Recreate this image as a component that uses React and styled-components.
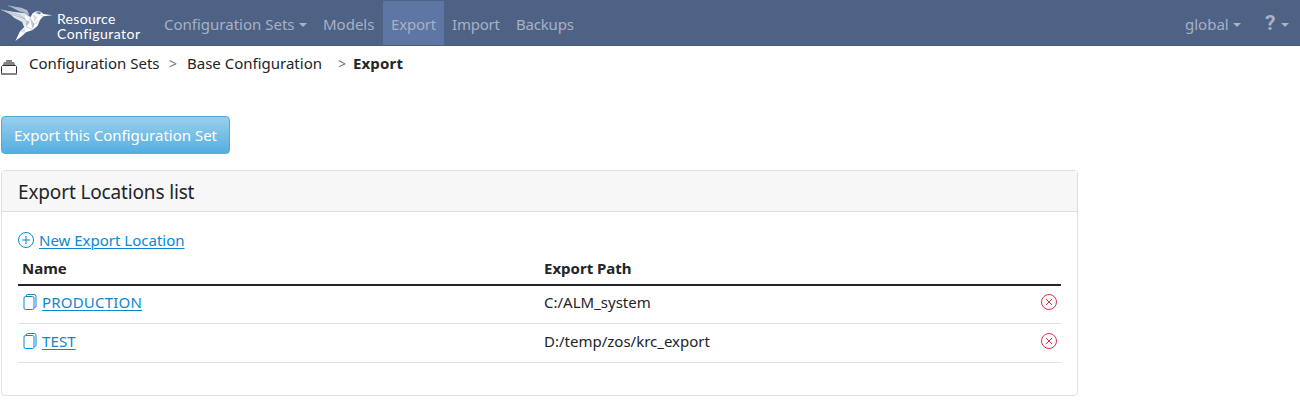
import React from "react";
import styled, { createGlobalStyle } from "styled-components";

const GlobalStyle = createGlobalStyle`
  * { box-sizing: border-box; }
  body {
    margin: 0;
    background: #fff;
    color: #212529;
    font: 15px/24px "Noto Sans", "Open Sans", sans-serif;
    overflow: hidden;
  }
`;

/* Text run with its own tracking */
const Label = styled.span`
  letter-spacing: ${(p) => p.$track ?? 0}px;
  white-space: nowrap;
`;

const Navbar = styled.nav`
  display: flex;
  height: 46px;
  padding: 1px 3px 1px 0;
  background: #4e6286;
  border-bottom: 1px solid #4a5d80;
`;

const Brand = styled.div`
  display: flex;
  width: 156px;
`;

const BrandName = styled.div`
  margin-left: 2px;
  padding-top: 10px;
  color: #fff;
  font: 14px/15px Lato, sans-serif;
`;

const NavItem = styled.a`
  display: flex;
  align-items: center;
  width: ${(p) => p.$width}px;
  height: 44px;
  padding: 2px 0 0 8px;
  color: #a7b1c3;
  background: ${(p) => (p.$active ? "#5d76a3" : "transparent")};
`;

const Caret = styled.i`
  margin: 1px 0 0 ${(p) => p.$gap ?? 4}px;
  border: 4px solid transparent;
  border-top-color: currentColor;
  border-bottom: 0;
`;

const Spacer = styled.div`
  flex: 1;
`;

const Question = styled.b`
  width: 11px;
  margin-top: -3px;
  font: bold 21px/24px Roboto, sans-serif;
`;

const Breadcrumb = styled.div`
  display: flex;
  height: 70px;
  padding: 5px 0 0 1px;
`;

const Crumb = styled.span`
  width: ${(p) => p.$width}px;
  font-weight: ${(p) => (p.$current ? 700 : 400)};
`;

const Separator = styled.span`
  width: ${(p) => p.$width}px;
  color: #6c757d;
  font-size: 14px;
  line-height: 26px;
`;

const StackIcon = styled.svg`
  width: 16px;
  height: 16px;
  flex-shrink: 0;
  margin: 8px 12px 0 0;
`;

const ExportButton = styled.button`
  display: block;
  width: 229px;
  height: 38px;
  margin-left: 1px;
  padding: 0 0 0 12px;
  text-align: left;
  color: #fff;
  font: inherit;
  border: 1px solid #54a9dc;
  border-radius: 4px;
  background: linear-gradient(#9acfee, #54aee0);
`;

const Card = styled.section`
  width: 1077px;
  height: 226px;
  margin: 16px 0 0 1px;
  border: 1px solid #dfdfdf;
  border-radius: 4px;
`;

const CardHeader = styled.header`
  height: 41px;
  padding: 9px 16px;
  font-size: 19px;
  border-bottom: 1px solid #dfdfdf;
  background: #f7f7f7;
`;

const CardBody = styled.div`
  padding: 16px;
`;

const Link = styled.a`
  display: flex;
  align-items: center;
  height: 24px;
  color: #0d87d0;
  ${Label} {
    text-decoration: underline;
    text-underline-offset: 2px;
    text-decoration-thickness: 1px;
  }
`;

const Icon = styled.svg`
  width: 16px;
  height: 16px;
  margin-right: ${(p) => p.$gap ?? 0}px;
  fill: none;
  stroke: ${(p) => p.$color ?? "#0d87d0"};
`;

const Row = styled.div`
  display: grid;
  grid-template-columns: 522px 1fr 20px;
  height: ${(p) => p.$height ?? 39}px;
  padding: ${(p) => (p.$height ? 4 : 5)}px 0 0 4px;
  font-weight: ${(p) => (p.$head ? 700 : 400)};
  border-bottom: ${(p) => (p.$head ? "2px solid #212529" : "1px solid #dee2e6")};
`;

const RemoveIcon = styled(Icon)`
  margin-top: 4px;
`;

const Bird = () => (
  <svg width="55" height="44" viewBox="0 3 165 132">
    <path d="M25 17L64 23 82 31 88 46 76 39 58 34Z" fill="#b4bed0" />
    <path d="M3 29L44 36 76 40 92 52 86 86 72 80 66 66 42 53 30 42Z" fill="#dfe3eb" />
    <path d="M76 46L90 54 98 40 110 33 122 35 130 42 157 46 130 49 120 60 113 77 98 90 78 97 66 108 46 123 60 94 74 80Z" fill="#fff" />
    <path d="M25 17L58 26 84 44M3 29L60 46 80 62M30 42L76 56" stroke="#a1acc2" fill="none" strokeWidth="2" />
    <path d="M90 54L104 72 98 88ZM76 60L90 66 78 80Z" fill="#b9c2d2" />
    <path d="M98 42L112 52 104 66ZM60 94L76 84 74 99Z" fill="#d6dbe5" />
    <path d="M90 54L78 80 98 88M104 72L120 60M104 39L130 48" stroke="#aab4c7" fill="none" strokeWidth="1.5" />
    <path d="M108 34L122 36 123 42 111 41Z" fill="#8d9bb8" />
    <circle cx="118" cy="39" r="2" fill="#4e6286" />
  </svg>
);

const Copy = () => (
  <Icon $gap={4} viewBox="-0.5 0 16 16">
    <rect x="1.5" y="2.5" width="10" height="13" rx="1.5" />
    <path d="M3.5 2.2Q3.7.5 5.3.5H11.5Q13.5.5 13.5 2.5V12Q13.5 13.4 11.8 13.7" />
  </Icon>
);

const locations = [
  { name: "PRODUCTION", path: "C:/ALM_system", height: 38, track: 0.2 },
  { name: "TEST", path: "D:/temp/zos/krc_export", track: 0.1 },
];

export default function App() {
  return (
    <>
      <GlobalStyle />
      <Navbar>
        <Brand>
          <Bird />
          <BrandName>
            <Label $track={0.3}>Resource</Label>
            <br />
            <Label $track={0.45}>Configurator</Label>
          </BrandName>
        </Brand>
        <NavItem $width={159}><Label>Configuration Sets</Label><Caret /></NavItem>
        <NavItem $width={68}><Label>Models</Label></NavItem>
        <NavItem $width={61} $active><Label $track={-0.2}>Export</Label></NavItem>
        <NavItem $width={64}><Label $track={-0.2}>Import</Label></NavItem>
        <NavItem $width={74}><Label $track={-0.2}>Backups</Label></NavItem>
        <Spacer />
        <NavItem $width={80}><Label>global</Label><Caret /></NavItem>
        <NavItem $width={40}><Question>?</Question><Caret $gap={5} /></NavItem>
      </Navbar>
      <Breadcrumb>
        <StackIcon viewBox="0 0 16 16">
          <path d="M5 1H11V3H13L14.5 6.5H1.5L3 3H5Z" fill="#858585" />
          <path d="M.5 15V7.5L1.5 6.5H14.5L15.5 7.5V15" fill="#fff" stroke="#333" />
          <path d="M0 15H16" stroke="#858585" strokeWidth="2" />
        </StackIcon>
        <Crumb $width={140}><Label>Configuration Sets</Label></Crumb>
        <Separator $width={18}>&gt;</Separator>
        <Crumb $width={151}><Label>Base Configuration</Label></Crumb>
        <Separator $width={15}>&gt;</Separator>
        <Crumb $current><Label $track={0.15}>Export</Label></Crumb>
      </Breadcrumb>
      <ExportButton><Label>Export this Configuration Set</Label></ExportButton>
      <Card>
        <CardHeader><Label $track={-0.15}>Export Locations list</Label></CardHeader>
        <CardBody>
          <Link>
            <Icon $gap={5} viewBox="0 0 16 16">
              <circle cx="8" cy="8" r="7.5" />
              <path d="M8 4V12M4 8H12" />
            </Icon>
            <Label>New Export Location</Label>
          </Link>
          <Row $head $height={34}>
            <Label>Name</Label>
            <Label>Export Path</Label>
          </Row>
          {locations.map(({ name, path, height, track }) => (
            <Row key={name} $height={height}>
              <Link><Copy /><Label $track={track}>{name}</Label></Link>
              <Label>{path}</Label>
              <RemoveIcon $color="#dc3545" viewBox="0 0 16 16">
                <circle cx="8" cy="8" r="7.5" />
                <path d="M5 5L11 11M11 5L5 11" />
              </RemoveIcon>
            </Row>
          ))}
        </CardBody>
      </Card>
    </>
  );
}
